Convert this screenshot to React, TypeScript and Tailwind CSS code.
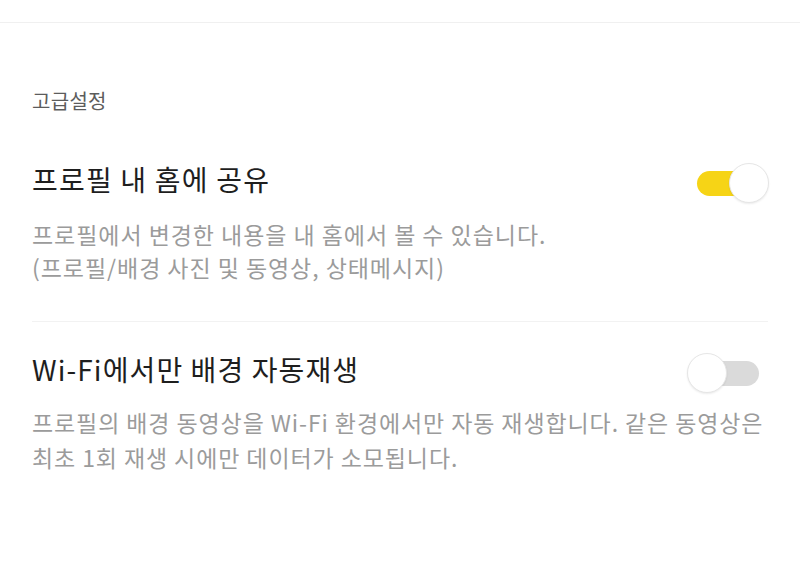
import React, { useState } from 'react';

const Toggle: React.FC<{ on: boolean; onChange: () => void }> = ({ on, onChange }) => {
  return (
    <button
      type="button"
      onClick={onChange}
      className="relative h-[40px] w-[82px] shrink-0"
      aria-pressed={on}
    >
      <span
        className={`absolute left-[10px] top-[8px] h-[25px] w-[62px] rounded-full ${
          on ? 'bg-[#f6d416]' : 'bg-[#dadada]'
        }`}
      />
      <span
        className={`absolute top-0 h-[40px] w-[40px] rounded-full border border-[#e6e6e6] bg-white shadow-[0_1px_2px_rgba(0,0,0,0.08)] ${
          on ? 'left-[42px]' : 'left-0'
        }`}
      />
    </button>
  );
};

const App: React.FC = () => {
  const [shareHome, setShareHome] = useState(true);
  const [wifiOnly, setWifiOnly] = useState(false);

  return (
    <div
      className="min-h-[568px] w-full bg-white"
      style={{ fontFamily: '"Noto Sans CJK KR", "Noto Sans", sans-serif' }}
    >
      <div className="h-[23px] border-b border-[#f0f0f0]" />

      <div className="px-[32px]">
        <h3 className="mt-[65px] text-[20px] leading-[26px] tracking-[0.3px] text-[#5c5c5c]">고급설정</h3>

        <div className="mt-[46px] pb-[37px] border-b border-[#f2f2f2]">
          <div className="flex items-start justify-between">
            <h2 className="text-[28px] leading-[38px] tracking-[1.2px] text-[#1e1e1e]">프로필 내 홈에 공유</h2>
            <div className="-mr-[1px] mt-[3px] -mb-[5px]">
              <Toggle on={shareHome} onChange={() => setShareHome(!shareHome)} />
            </div>
          </div>
          <p className="mt-[15px] whitespace-nowrap text-[23px] leading-[33px] tracking-[0.95px] text-[#9b9b9b]">
            프로필에서 변경한 내용을 내 홈에서 볼 수 있습니다.
            <br />
            (프로필/배경 사진 및 동영상, 상태메시지)
          </p>
        </div>

        <div className="mt-[28px]">
          <div className="flex items-start justify-between">
            <h2 className="text-[28px] leading-[38px] tracking-[1.1px] text-[#1e1e1e]">Wi-Fi에서만 배경 자동재생</h2>
            <div className="-mr-[1px] mt-[3px] -mb-[5px]">
              <Toggle on={wifiOnly} onChange={() => setWifiOnly(!wifiOnly)} />
            </div>
          </div>
          <p className="mt-[12px] whitespace-nowrap text-[23px] leading-[35px] tracking-[0.9px] text-[#9b9b9b]">
            프로필의 배경 동영상을 Wi-Fi 환경에서만 자동 재생합니다. 같은 동영상은
            <br />
            최초 1회 재생 시에만 데이터가 소모됩니다.
          </p>
        </div>
      </div>
    </div>
  );
};

export default App;
